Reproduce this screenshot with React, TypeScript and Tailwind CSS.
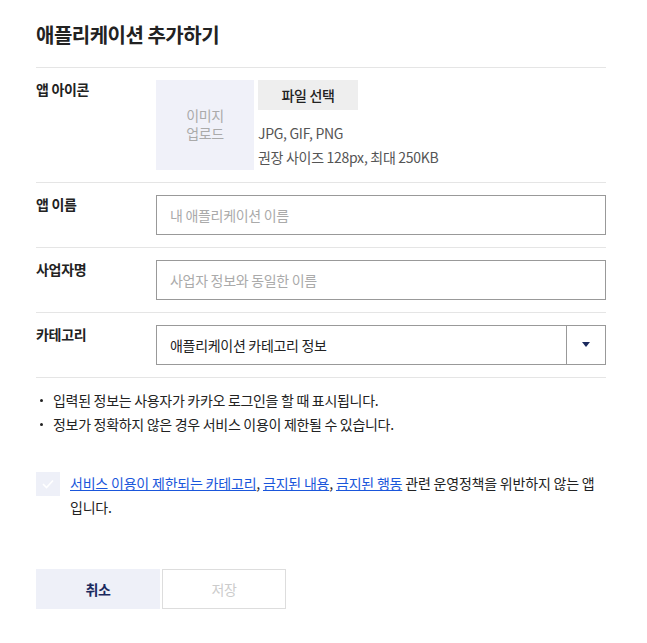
import React from "react";

export default function App() {
  const font = { fontFamily: '"Noto Sans CJK KR", "Noto Sans", sans-serif' };
  return (
    <div style={font} className="w-[647px] h-[643px] bg-white text-[#222] tracking-[-0.3px]">
      <div className="pl-[36px] pr-[41px] pt-[20px]">
        <h1 className="text-[20px] font-bold leading-[30px] tracking-[-0.5px] text-[#222]">애플리케이션 추가하기</h1>
        <div className="mt-[17px] border-t border-[#e5e5e5]" />

        {/* App icon row */}
        <div className="flex pt-[12px] pb-[12px] border-b border-[#e5e5e5]">
          <div className="w-[120px] text-[14px] font-bold leading-[20px] -mt-[1px]">앱 아이콘</div>
          <div className="flex">
            <div className="w-[98px] h-[90px] bg-[#f0f1f9] flex flex-col items-center justify-center text-[14px] leading-[18px] text-[#aaa] pb-[2px]">
              <span>이미지</span>
              <span>업로드</span>
            </div>
            <div className="ml-[4px] flex flex-col">
              <button className="w-[100px] h-[30px] bg-[#eeeeee] text-[14px] font-medium text-[#222] leading-[30px]">파일 선택</button>
              <div className="mt-[11px] text-[14px] leading-[24px] text-[#555]">JPG, GIF, PNG</div>
              <div className="text-[14px] leading-[24px] text-[#555]">권장 사이즈 128px, 최대 250KB</div>
            </div>
          </div>
        </div>

        {/* App name */}
        <div className="flex py-[12px] border-b border-[#e5e5e5]">
          <div className="w-[120px] text-[14px] font-bold leading-[20px] -mt-[1px]">앱 이름</div>
          <div className="flex-1 h-[40px] border border-[#999] flex items-center px-[13px] text-[14px] text-[#aaa]">내 애플리케이션 이름</div>
        </div>

        {/* Business name */}
        <div className="flex py-[12px] border-b border-[#e5e5e5]">
          <div className="w-[120px] text-[14px] font-bold leading-[20px] -mt-[1px]">사업자명</div>
          <div className="flex-1 h-[40px] border border-[#999] flex items-center px-[13px] text-[14px] text-[#aaa]">사업자 정보와 동일한 이름</div>
        </div>

        {/* Category */}
        <div className="flex py-[12px] border-b border-[#e5e5e5]">
          <div className="w-[120px] text-[14px] font-bold leading-[20px] -mt-[1px]">카테고리</div>
          <div className="flex-1 h-[40px] border border-[#999] flex items-center">
            <div className="flex-1 px-[13px] text-[14px] text-[#222]">애플리케이션 카테고리 정보</div>
            <div className="w-[39px] h-full border-l border-[#999] flex items-center justify-center">
              <svg width="8" height="6" viewBox="0 0 8 6">
                <path d="M0 0 L8 0 L4 5 Z" fill="#1b2a5e" />
              </svg>
            </div>
          </div>
        </div>

        {/* Notes */}
        <ul className="mt-[10px] text-[14px] leading-[24px] text-[#222]">
          <li className="flex items-center"><span className="w-[3px] h-[3px] rounded-full bg-[#222] ml-[4px] mr-[10px]" />입력된 정보는 사용자가 카카오 로그인을 할 때 표시됩니다.</li>
          <li className="flex items-center"><span className="w-[3px] h-[3px] rounded-full bg-[#222] ml-[4px] mr-[10px]" />정보가 정확하지 않은 경우 서비스 이용이 제한될 수 있습니다.</li>
        </ul>

        {/* Checkbox */}
        <div className="mt-[36px] flex items-start">
          <div className="w-[24px] h-[24px] bg-[#eef0f8] flex items-center justify-center shrink-0">
            <svg width="12" height="10" viewBox="0 0 12 10">
              <path d="M1 5 L4.5 8.5 L11 1.5" stroke="#fff" strokeWidth="1.6" fill="none" />
            </svg>
          </div>
          <p className="ml-[10px] -mt-[1px] text-[14px] leading-[24px] text-[#222] tracking-[-0.2px]">
            <a className="text-[#1a56db] underline">서비스 이용이 제한되는 카테고리</a>, <a className="text-[#1a56db] underline">금지된 내용</a>, <a className="text-[#1a56db] underline">금지된 행동</a> 관련 운영정책을 위반하지 않는 앱<br />입니다.
          </p>
        </div>

        {/* Buttons */}
        <div className="mt-[50px] flex gap-[2px]">
          <button className="w-[124px] h-[40px] bg-[#eef0f8] text-[14px] font-bold text-[#1b2a5e]">취소</button>
          <button className="w-[124px] h-[40px] border border-[#ddd] text-[14px] text-[#ccc]">저장</button>
        </div>
      </div>
    </div>
  );
}
